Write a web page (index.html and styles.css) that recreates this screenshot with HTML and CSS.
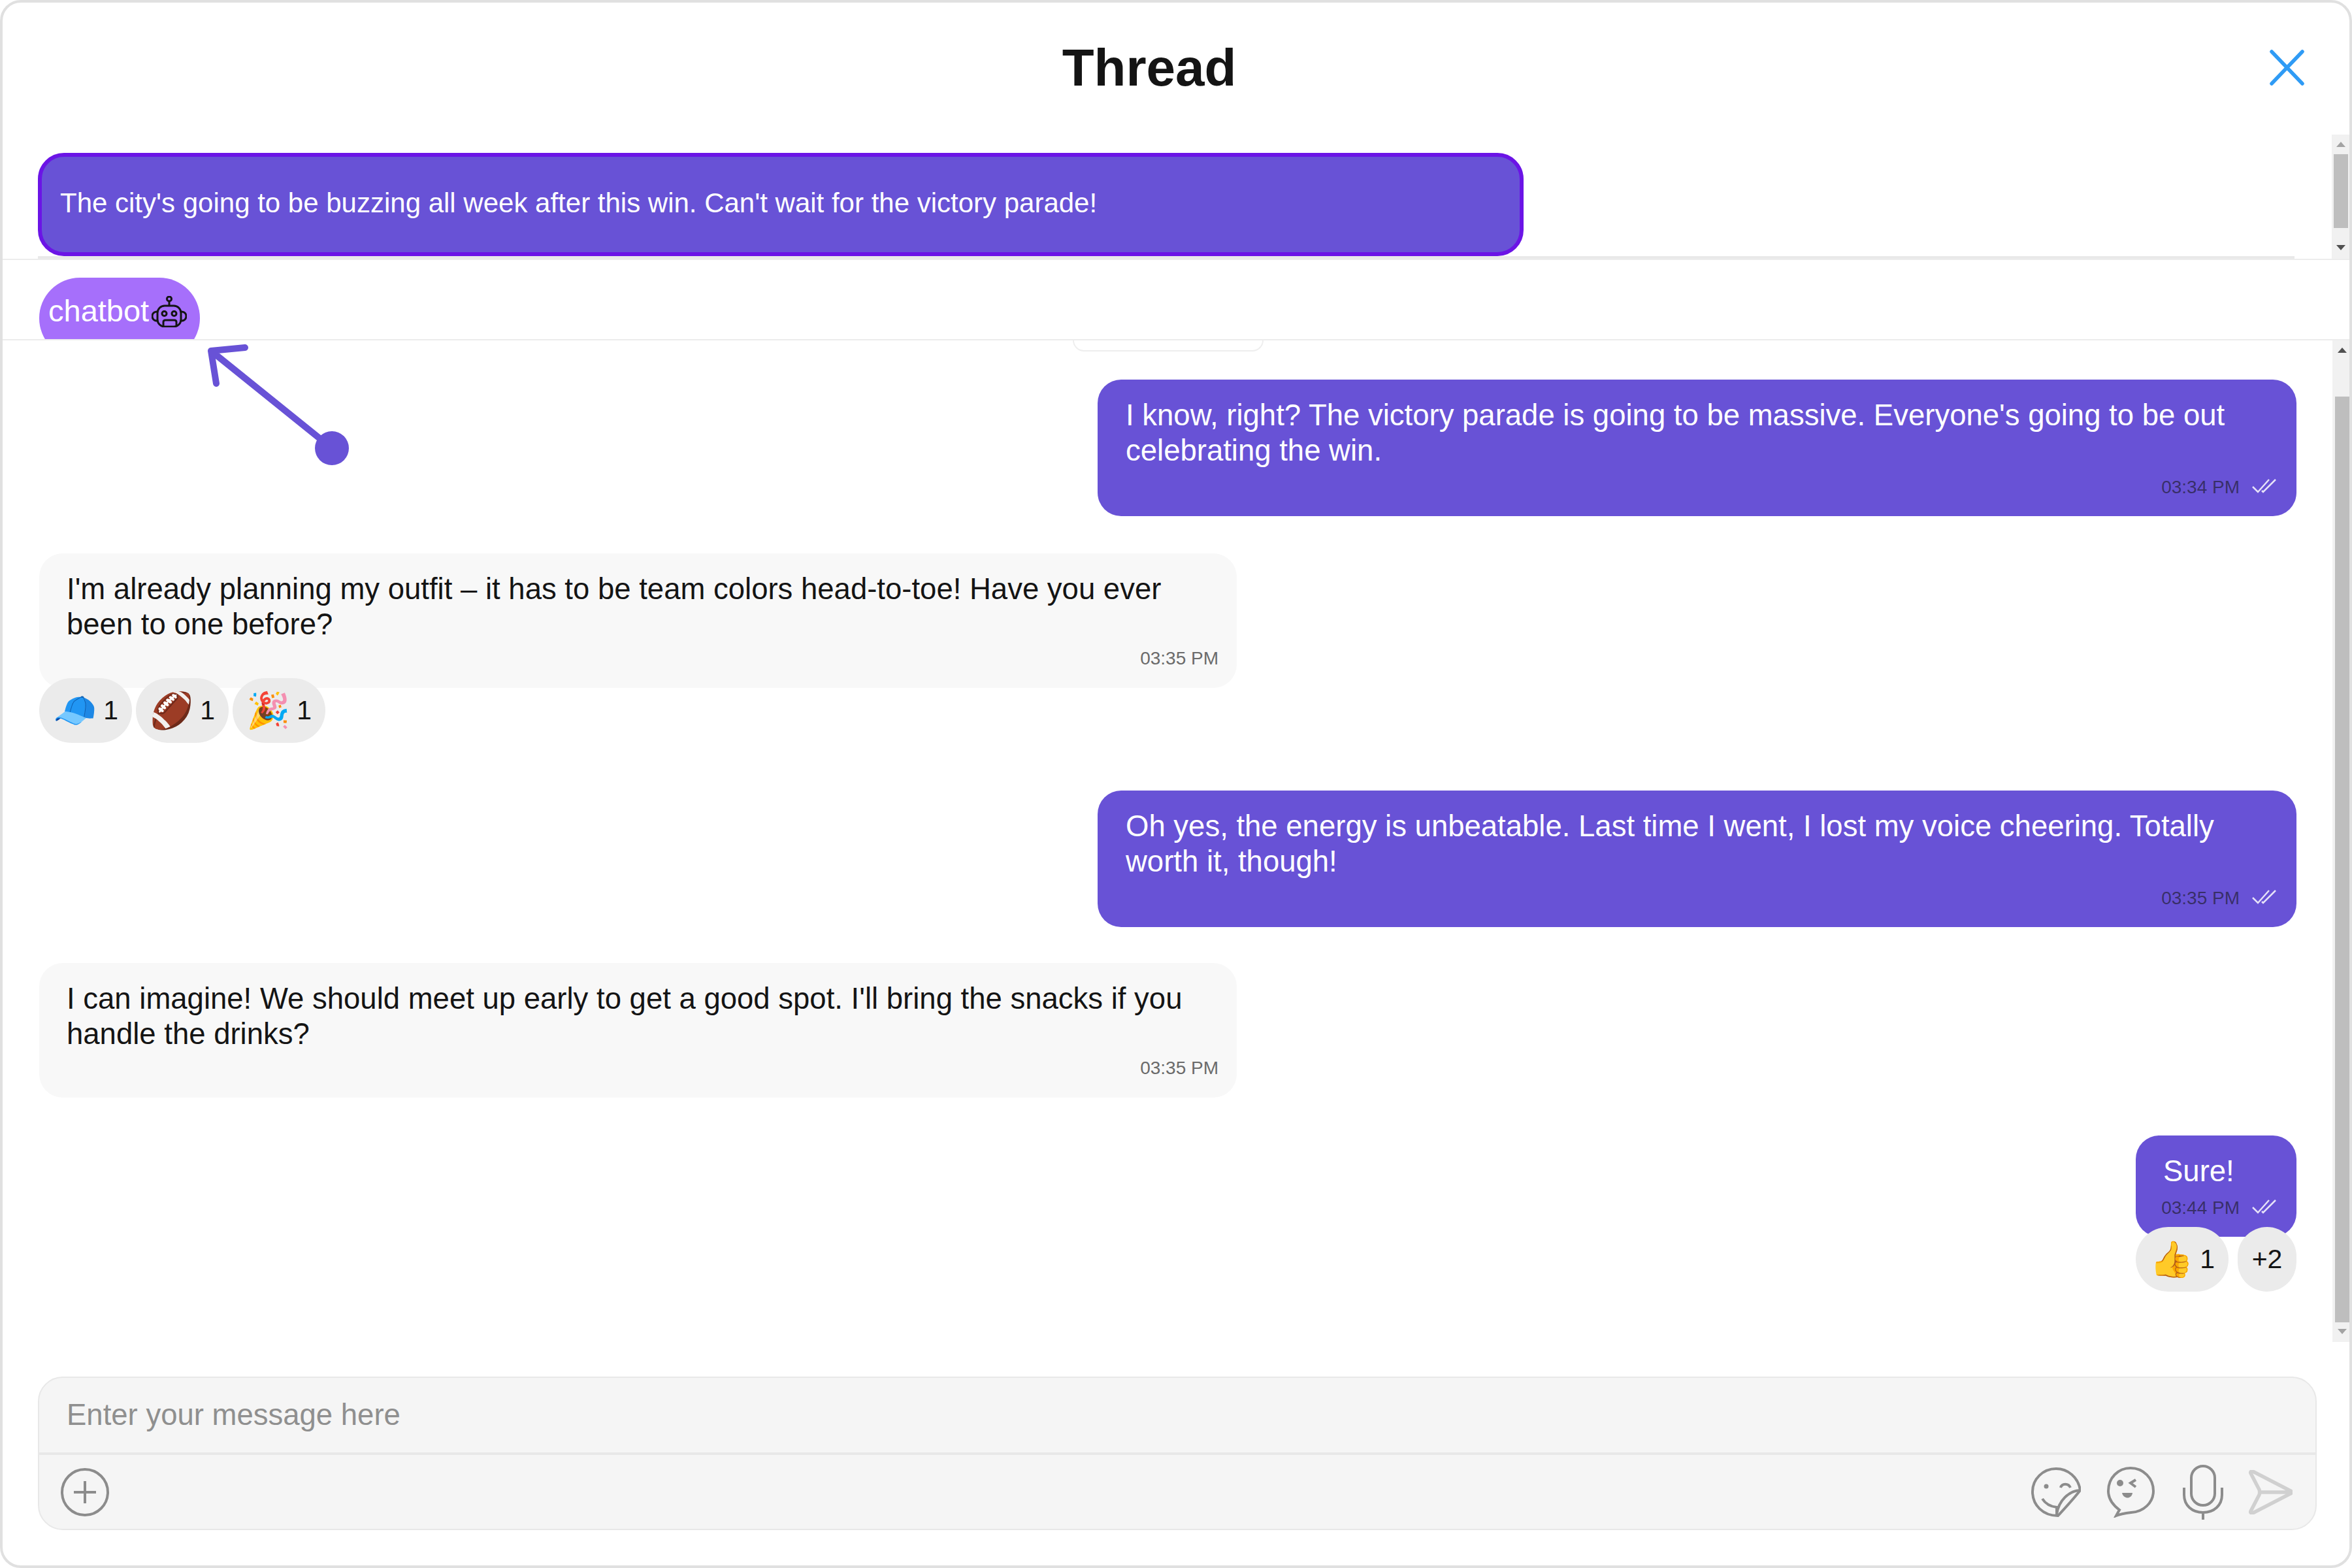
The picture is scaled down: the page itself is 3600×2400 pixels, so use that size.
FILE: index.html
```html
<!DOCTYPE html>
<html lang="en">
<head>
  <meta charset="UTF-8" />
  <title>Thread</title>
  <link rel="stylesheet" href="styles.css">
</head>
<body>
  <div class="thread">
    <div class="header">
      <h2>Thread</h2>
      <svg class="close" viewBox="0 0 53 55"><path d="M3 3L50 52M50 3L3 52"/></svg>
    </div>

    <div class="parent-row">
      <div class="parent-col">
        <div class="parent-msg">The city's going to be buzzing all week after this win. Can't wait for the victory parade!</div>
      </div>
      <div class="scrollbar small">
        <span class="up"></span><span class="space-a"></span><span class="thumb"></span><span class="space-b"></span><span class="down"></span>
      </div>
    </div>

    <div class="bot-strip">
      <div class="bot-pill">chatbot
        <svg class="robot" viewBox="0 0 54 48">
          <circle cx="27" cy="4.5" r="3.5"/>
          <path d="M27 8V15"/>
          <rect x="9" y="15" width="36" height="32" rx="11"/>
          <path d="M9 24C3 24 1 28 1 31S3 38 9 38M45 24C51 24 53 28 53 31S51 38 45 38"/>
          <circle cx="19.500" cy="27" r="3.5"/>
          <circle cx="34.500" cy="27" r="3.5"/>
          <path d="M18 47V40Q18 37 21 37H35Q38 37 38 40V47"/>
        </svg>
      </div>
    </div>

    <div class="body-row">
      <div class="messages">
        <div class="date-chip"></div>

        <div class="msg sent">
          <div class="bubble">
            <p>I know, right? The victory parade is going to be massive. Everyone's going to be out celebrating the win.</p>
            <div class="meta"><span>03:34 PM</span><svg class="ticks" viewBox="0 0 37 23"><path d="M1 13L9 21L26 2M15 19L17 21L36 2"/></svg></div>
          </div>
        </div>

        <div class="msg received gap-a">
          <div class="bubble">
            <p>I'm already planning my outfit – it has to be team colors head-to-toe! Have you ever been to one before?</p>
            <div class="meta"><span>03:35 PM</span></div>
          </div>
          <div class="reactions">
            <div class="reaction"><span class="emoji">🧢</span><span>1</span></div>
            <div class="reaction"><span class="emoji">🏈</span><span>1</span></div>
            <div class="reaction"><span class="emoji">🎉</span><span>1</span></div>
          </div>
        </div>

        <div class="msg sent gap-b">
          <div class="bubble">
            <p>Oh yes, the energy is unbeatable. Last time I went, I lost my voice cheering. Totally worth it, though!</p>
            <div class="meta"><span>03:35 PM</span><svg class="ticks" viewBox="0 0 37 23"><path d="M1 13L9 21L26 2M15 19L17 21L36 2"/></svg></div>
          </div>
        </div>

        <div class="msg received gap-d">
          <div class="bubble">
            <p>I can imagine! We should meet up early to get a good spot. I'll bring the snacks if you handle the drinks?</p>
            <div class="meta"><span>03:35 PM</span></div>
          </div>
        </div>

        <div class="msg sent gap-c">
          <div class="bubble short">
            <p>Sure!</p>
            <div class="meta"><span>03:44 PM</span><svg class="ticks" viewBox="0 0 37 23"><path d="M1 13L9 21L26 2M15 19L17 21L36 2"/></svg></div>
          </div>
          <div class="reactions">
            <div class="reaction"><span class="emoji">👍</span><span>1</span></div>
            <div class="reaction more">+2</div>
          </div>
        </div>
      </div>
      <div class="scrollbar big">
        <span class="up"></span><span class="space-a"></span><span class="thumb"></span><span class="space-b"></span><span class="down"></span>
      </div>
    </div>

    <div class="composer">
      <div class="composer-input">Enter your message here</div>
      <div class="composer-actions">
        <svg class="icon plus" viewBox="0 0 76 76"><circle cx="38" cy="38" r="35"/><path d="M38 21V55M21 38H55"/></svg>
        <div class="actions-right">
          <svg class="icon sticker" viewBox="0 0 76 76">
            <path d="M75 35C72 15 56 2 38 2C18 2 2 18 2 37C2 58 18 74 41 74C52 62 66 47 75 35Z"/>
            <path d="M75 35C58 36 42 50 39 72"/>
            <path d="M17 48C22 56 30 60 39 61V73M45 31C47 24 57 24 60 31"/>
            <circle class="fill" cx="23" cy="29" r="3.500"/>
          </svg>
          <svg class="icon wink" viewBox="0 0 73 78">
            <path d="M14 75L19 66C8 58 2 48 2 37C2 17 17 2 36 2C56 2 71 18 71 37C71 55 56 69 37 70C29 71 21 72 14 75Z"/>
            <path d="M44 20L36 25L44 31"/>
            <circle class="fill" cx="20" cy="25" r="5"/>
            <path class="fill" d="M23 40H39C38 50 25 50 23 40Z"/>
          </svg>
          <svg class="icon mic" viewBox="0 0 64 84">
            <rect x="14" y="2" width="36" height="60" rx="18"/>
            <path d="M3 35V46C3 62 15 73 32 73C49 73 61 62 61 46V35M32 73V84"/>
          </svg>
          <svg class="icon send" viewBox="0 0 68 68">
            <path d="M4 5C3 3 5 1 7 2L65 32C67 33 67 35 65 36L7 66C5 67 3 65 4 63L17 38C18 35 18 33 17 30L4 5ZM18 34H66"/>
          </svg>
        </div>
      </div>
    </div>

    <svg class="pointer" viewBox="0 0 220 190">
      <path d="M194 162L9 13M9 13L61 8M9 13L17 63"/>
      <circle cx="194" cy="162" r="26"/>
    </svg>
  </div>
</body>
</html>
```

FILE: styles.css
```css
* {
  box-sizing: border-box;
}
html, body {
  margin: 0;
  height: 100%;
}
body {
  font-family: "Liberation Sans", Arial, sans-serif;
  color: #141414;
  background: #fff;
}
p, h2 {
  margin: 0;
}
.thread {
  position: relative;
  height: 2400px;
  width: 3600px;
  border: 4px solid #e0e0e0;
  border-radius: 32px;
  display: flex;
  flex-direction: column;
  overflow: hidden;
  background: #fff;
}

/* header */
.header {
  height: 202px;
  flex: none;
  display: flex;
  align-items: flex-start;
  justify-content: center;
  position: relative;
  padding-top: 54px;
}
.header h2 {
  font-size: 80px;
  line-height: 92px;
  font-weight: 700;
  padding-right: 82px;
}
.close {
  position: absolute;
  top: 72px;
  right: 69px;
  width: 53px;
  height: 55px;
  fill: none;
  stroke: #2f9bf5;
  stroke-width: 5.5;
  stroke-linecap: round;
}

/* parent message */
.parent-row {
  flex: none;
  height: 192px;
  display: flex;
  border-bottom: 2px solid #ececec;
}
.parent-col {
  flex: 1;
  padding: 28px 57px 0 54px;
}
.parent-msg {
  width: 2274px;
  height: 158px;
  background: #6852d6;
  border: 6px solid #6b14e6;
  border-radius: 40px;
  color: #fff;
  font-size: 42px;
  line-height: 142px;
  padding-left: 28px;
  white-space: nowrap;
}
.parent-col::after {
  content: "";
  display: block;
  height: 4px;
  background: #e9e9e9;
}

/* fake scrollbars */
.scrollbar {
  flex: none;
  display: flex;
  flex-direction: column;
  align-items: center;
  background: #f1f1f1;
}
.scrollbar.small {
  width: 27px;
}
.scrollbar.big {
  width: 26px;
  padding-left: 4px;
}
.scrollbar .thumb {
  width: 22px;
  background: #bebebe;
}
.scrollbar .up, .scrollbar .down {
  width: 0;
  height: 0;
  border-left: 7px solid transparent;
  border-right: 7px solid transparent;
}
.scrollbar .up {
  border-bottom: 8px solid #a3a3a3;
  margin-top: 11px;
}
.scrollbar .down {
  border-top: 8px solid #505050;
}
.scrollbar.small .space-a { height: 11px; }
.scrollbar.small .thumb { height: 113px; }
.scrollbar.small .space-b { height: 26px; }
.scrollbar.big .up { border-bottom-color: #505050; }
.scrollbar.big .down { border-top-color: #a3a3a3; }
.scrollbar.big .space-a { height: 67px; }
.scrollbar.big .thumb { height: 1417px; }
.scrollbar.big .space-b { height: 10px; }

/* who is in the thread */
.bot-strip {
  flex: none;
  height: 123px;
  border-bottom: 2px solid #ececec;
  padding: 27px 0 0 56px;
  overflow: hidden;
}
.bot-pill {
  width: 246px;
  height: 124px;
  border-radius: 62px;
  background: #a66ffb;
  color: #fff;
  font-size: 47px;
  line-height: 50px;
  padding: 26px 0 0 14px;
  display: flex;
  align-items: flex-start;
  gap: 4px;
}
.robot {
  width: 54px;
  height: 48px;
  margin-top: 2px;
  fill: none;
  stroke: #141414;
  stroke-width: 3;
}

/* messages */
.body-row {
  flex: none;
  height: 1533px;
  display: flex;
}
.messages {
  flex: 1;
  padding: 0 55px 0 56px;
  display: flex;
  flex-direction: column;
}
.date-chip {
  flex: none;
  align-self: center;
  width: 292px;
  height: 17px;
  margin-bottom: 43px;
  border: 2px solid #eeeeee;
  border-top: 0;
  border-radius: 0 0 24px 24px;
}
.msg {
  display: flex;
  flex-direction: column;
}
.msg.sent {
  align-items: flex-end;
}
.msg.received {
  align-items: flex-start;
}
.gap-a { margin-top: 57px; }
.gap-b { margin-top: 73px; }
.gap-c { margin-top: 58px; }
.gap-d { margin-top: 55px; }
.bubble {
  width: 1833px;
  height: 206px;
  border-radius: 36px;
  padding: 28px 28px 0 42px;
  font-size: 45.5px;
  line-height: 54px;
}
.sent .bubble {
  width: 1835px;
  height: 209px;
  padding: 28px 31px 0 43px;
  background: #6852d6;
  color: #fff;
}
.received .bubble {
  background: #f8f8f8;
}
.sent .bubble.short {
  width: 246px;
  height: 155px;
  padding-left: 42px;
}
.meta {
  display: flex;
  justify-content: flex-end;
  align-items: center;
  gap: 19px;
  font-size: 28px;
  line-height: 34px;
  height: 34px;
  margin-top: 8px;
  color: #6b6b6b;
  white-space: nowrap;
}
.sent .meta {
  margin-top: 12px;
  color: rgba(20, 20, 20, 0.58);
}
.ticks {
  flex: none;
  width: 37px;
  height: 23px;
  margin-top: -6px;
  fill: none;
  stroke: #e6e2f8;
  stroke-width: 2.5;
}
.reactions {
  display: flex;
  gap: 6px;
  margin-top: -15px;
}
.sent .reactions {
  gap: 14px;
  position: relative;
}
.reaction {
  height: 99px;
  width: 142px;
  border-radius: 50px;
  background: #ebebeb;
  display: flex;
  align-items: center;
  justify-content: center;
  gap: 10px;
  font-size: 41px;
}
.reaction.more {
  width: 90px;
}
.emoji {
  font-family: "Noto Color Emoji", sans-serif;
  font-size: 54px;
  line-height: 60px;
}

/* composer */
.composer {
  flex: none;
  width: 3488px;
  height: 235px;
  margin: 53px 0 0 54px;
  background: #f5f5f5;
  border: 2px solid #e8e8e8;
  border-radius: 38px;
  overflow: hidden;
}
.composer-input {
  height: 118px;
  border-bottom: 4px solid #e8e8e8;
  padding-left: 42px;
  font-size: 45.5px;
  line-height: 114px;
  color: #8f8f8f;
}
.composer-actions {
  display: flex;
  justify-content: space-between;
  padding: 19px 35px 0 32px;
}
.actions-right {
  display: flex;
  align-items: center;
  gap: 40px;
  height: 76px;
}
.icon {
  fill: none;
  stroke: #8c8c8c;
  stroke-width: 4;
}
.icon .fill {
  fill: #8c8c8c;
  stroke: none;
}
.plus { width: 76px; height: 76px; }
.sticker { width: 76px; height: 76px; }
.wink { width: 73px; height: 78px; }
.mic { width: 64px; height: 84px; margin: 0 -3px 0 2px; }
.send { width: 68px; height: 68px; stroke: #d0d0d0; stroke-width: 5.5; }

/* annotation arrow on top of the thread */
.pointer {
  position: absolute;
  left: 310px;
  top: 520px;
  width: 220px;
  height: 190px;
  fill: #6852d6;
  stroke: #6852d6;
  stroke-width: 10;
  stroke-linecap: round;
}
.pointer circle {
  stroke: none;
}
```
